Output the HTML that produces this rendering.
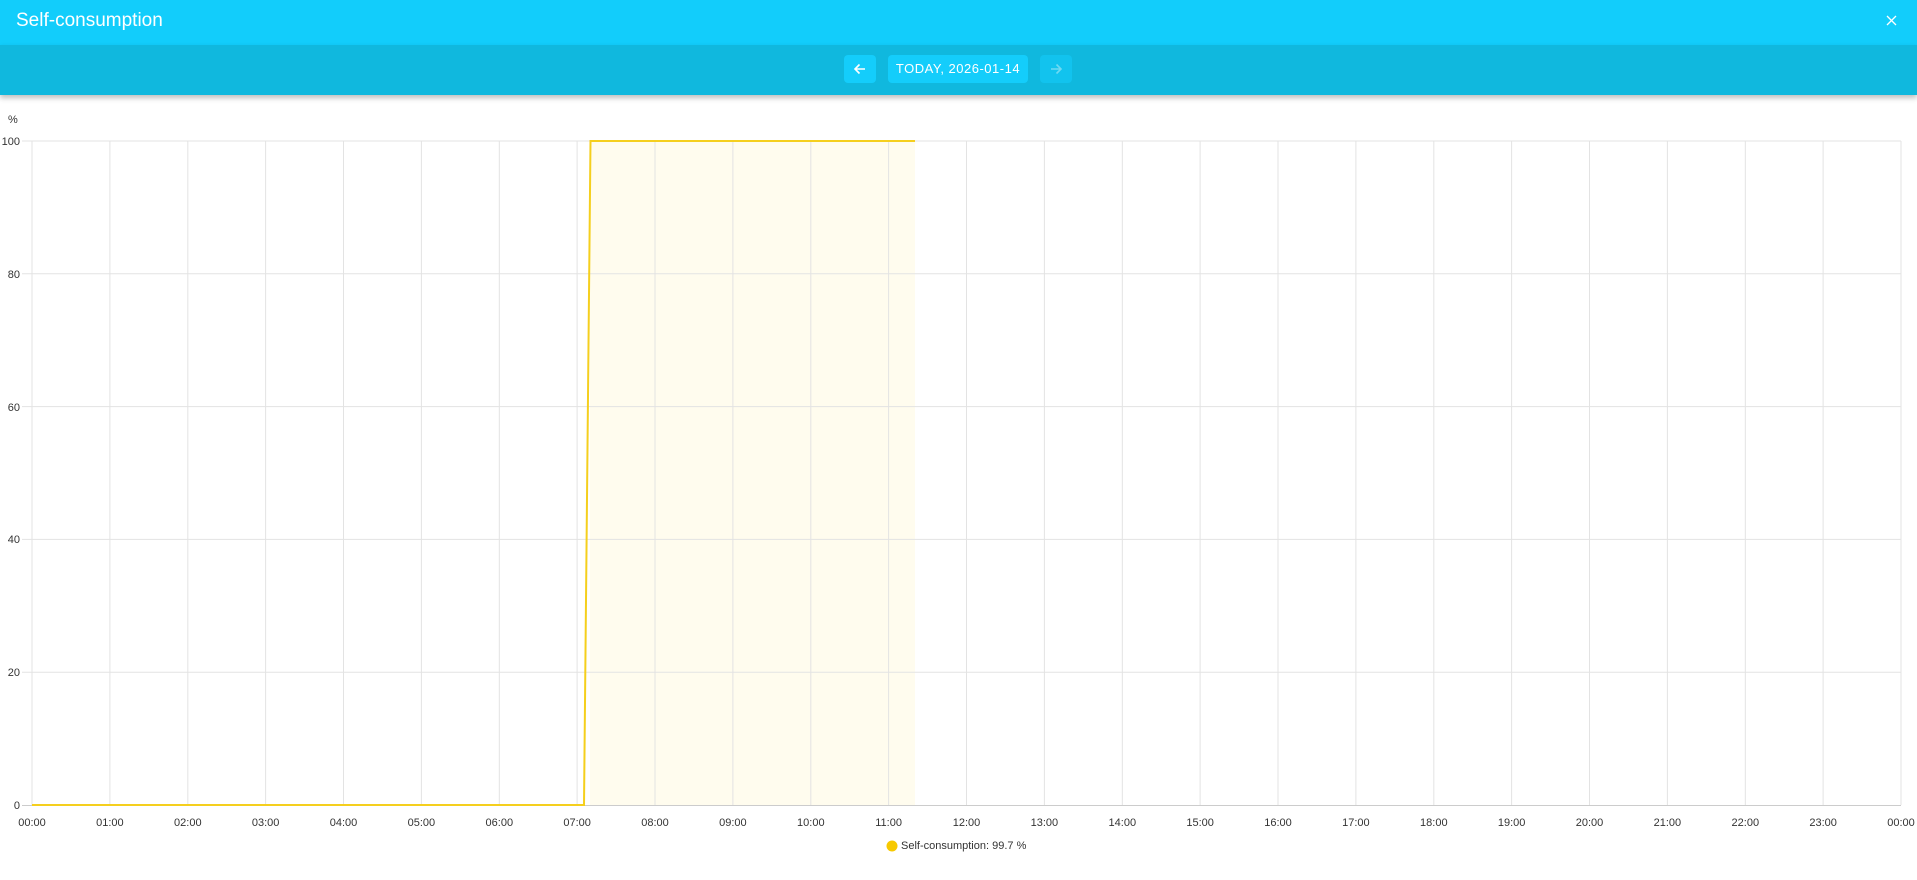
<!DOCTYPE html>
<html><head><meta charset="utf-8"><style>
*{margin:0;padding:0;box-sizing:border-box}
body{width:1917px;height:880px;background:#fff;font-family:"Liberation Sans",sans-serif;overflow:hidden;position:relative}
.top{position:absolute;left:0;top:0;width:1917px;height:45px;background:#12cdfb}
.title{position:absolute;left:16px;top:10px;color:#fff;font-size:19px}
.close{position:absolute;left:1886px;top:15px}
.nav{position:absolute;left:0;top:45px;width:1917px;height:50px;background:#10b8de;box-shadow:0 3px 5px rgba(0,0,0,.25)}
.btn{position:absolute;top:10px;height:28px;border-radius:4px;background:#14cdfb;color:#fff;font-size:13px;text-align:center;line-height:28px}
</style></head><body>
<div class="top"><div class="title">Self-consumption</div><svg class="close" width="11" height="11" viewBox="0 0 11 11"><path d="M1 1L10 10M10 1L1 10" stroke="#fff" stroke-width="1.3"/></svg></div>
<div class="nav">
<div class="btn" style="left:844px;width:32px"><svg width="14" height="14" viewBox="0 0 14 14" style="margin-top:7px"><path d="M12 7H2M6.5 2.5L2 7l4.5 4.5" stroke="#fff" stroke-width="1.6" fill="none"/></svg></div>
<div class="btn" style="left:888px;width:140px;letter-spacing:0.5px">TODAY, 2026-01-14</div>
<div class="btn" style="left:1040px;width:32px;background:#12c3ee"><svg width="14" height="14" viewBox="0 0 14 14" style="margin-top:7px"><path d="M2 7h10M7.5 2.5L12 7l-4.5 4.5" stroke="#6fd9f2" stroke-width="1.6" fill="none"/></svg></div>
</div>
<svg width="1917" height="880" style="position:absolute;left:0;top:0;z-index:-1" font-family="Liberation Sans, sans-serif" font-size="11" fill="#333">
<rect x="590" y="141" width="325" height="664" fill="#fffcee"/>
<g stroke="#e3e3e3" stroke-width="1">
<line x1="22" x2="1901" y1="141" y2="141"/><line x1="22" x2="1901" y1="273.8" y2="273.8"/><line x1="22" x2="1901" y1="406.6" y2="406.6"/><line x1="22" x2="1901" y1="539.4" y2="539.4"/><line x1="22" x2="1901" y1="672.2" y2="672.2"/><line x1="22" x2="1901" y1="805.5" y2="805.5" stroke="#ccc"/>
<line x1="32" x2="32" y1="141" y2="805"/><line x1="109.9" x2="109.9" y1="141" y2="805"/><line x1="187.8" x2="187.8" y1="141" y2="805"/><line x1="265.6" x2="265.6" y1="141" y2="805"/><line x1="343.5" x2="343.5" y1="141" y2="805"/><line x1="421.4" x2="421.4" y1="141" y2="805"/><line x1="499.3" x2="499.3" y1="141" y2="805"/><line x1="577.1" x2="577.1" y1="141" y2="805"/><line x1="655" x2="655" y1="141" y2="805"/><line x1="732.9" x2="732.9" y1="141" y2="805"/><line x1="810.8" x2="810.8" y1="141" y2="805"/><line x1="888.6" x2="888.6" y1="141" y2="805"/><line x1="966.5" x2="966.5" y1="141" y2="805"/><line x1="1044.4" x2="1044.4" y1="141" y2="805"/><line x1="1122.3" x2="1122.3" y1="141" y2="805"/><line x1="1200.1" x2="1200.1" y1="141" y2="805"/><line x1="1278" x2="1278" y1="141" y2="805"/><line x1="1355.9" x2="1355.9" y1="141" y2="805"/><line x1="1433.8" x2="1433.8" y1="141" y2="805"/><line x1="1511.6" x2="1511.6" y1="141" y2="805"/><line x1="1589.5" x2="1589.5" y1="141" y2="805"/><line x1="1667.4" x2="1667.4" y1="141" y2="805"/><line x1="1745.3" x2="1745.3" y1="141" y2="805"/><line x1="1823.1" x2="1823.1" y1="141" y2="805"/><line x1="1901" x2="1901" y1="141" y2="805"/>
</g>
<polyline points="32,805 584,805 590.5,141 915,141" fill="none" stroke="#f5cf1e" stroke-width="2"/>
<text x="8" y="123">%</text>
<g text-anchor="end"><text x="20" y="145">100</text><text x="20" y="278">80</text><text x="20" y="411">60</text><text x="20" y="543">40</text><text x="20" y="676">20</text><text x="20" y="809">0</text></g>
<g text-anchor="middle">
<text x="32" y="826">00:00</text><text x="109.9" y="826">01:00</text><text x="187.8" y="826">02:00</text><text x="265.6" y="826">03:00</text><text x="343.5" y="826">04:00</text><text x="421.4" y="826">05:00</text><text x="499.3" y="826">06:00</text><text x="577.1" y="826">07:00</text><text x="655" y="826">08:00</text><text x="732.9" y="826">09:00</text><text x="810.8" y="826">10:00</text><text x="888.6" y="826">11:00</text><text x="966.5" y="826">12:00</text><text x="1044.4" y="826">13:00</text><text x="1122.3" y="826">14:00</text><text x="1200.1" y="826">15:00</text><text x="1278" y="826">16:00</text><text x="1355.9" y="826">17:00</text><text x="1433.8" y="826">18:00</text><text x="1511.6" y="826">19:00</text><text x="1589.5" y="826">20:00</text><text x="1667.4" y="826">21:00</text><text x="1745.3" y="826">22:00</text><text x="1823.1" y="826">23:00</text><text x="1901" y="826">00:00</text>
</g>
<circle cx="892" cy="846" r="5.5" fill="#f7c900"/>
<text x="901" y="849">Self-consumption: 99.7 %</text>
</svg>
</body></html>
